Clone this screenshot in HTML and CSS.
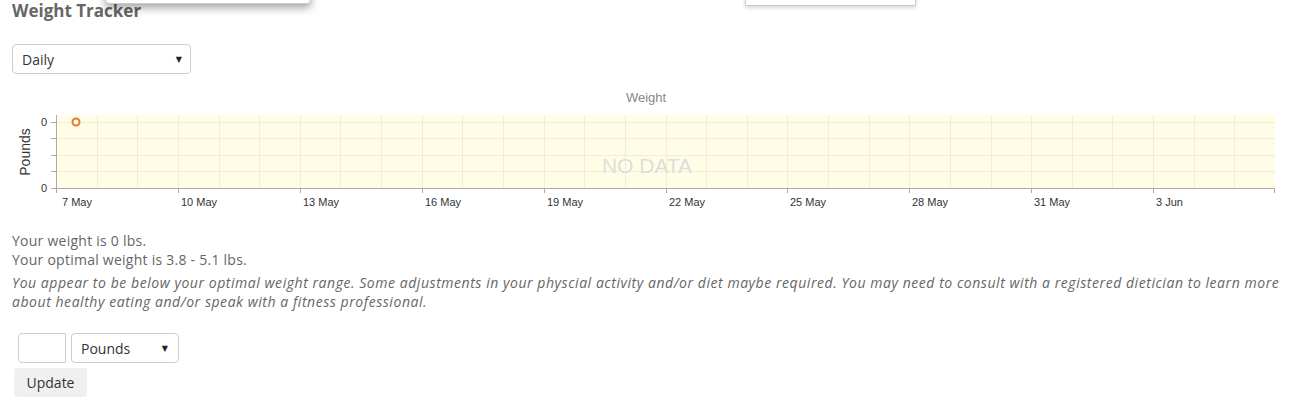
FILE: index.html
```html
<!DOCTYPE html>
<html>
<head>
<meta charset="utf-8">
<link rel="stylesheet" href="styles.css">
</head>
<body>
<div class="page">
  <h2 class="title">Weight Tracker</h2>
  <div class="select period"><span>Daily</span><span class="caret">&#9660;</span></div>
  <svg class="chart" width="1306" height="130" viewBox="0 84 1306 130" xmlns="http://www.w3.org/2000/svg">
    <text x="646" y="102" class="ctitle" text-anchor="middle">Weight</text>
    <rect x="56" y="115" width="1219" height="73" fill="#fffde6"/>
    <g stroke="#efeed6" stroke-width="1">
      <line x1="56" y1="122.5" x2="1275" y2="122.5"/>
      <line x1="56" y1="138.5" x2="1275" y2="138.5"/>
      <line x1="56" y1="155.5" x2="1275" y2="155.5"/>
      <line x1="56" y1="171.5" x2="1275" y2="171.5"/>
    </g>
    <g id="vgrid" stroke="#efeed6" stroke-width="1"></g>
    <text x="647" y="173" class="nodata" text-anchor="middle">NO DATA</text>
    <g stroke="#aaa" stroke-width="1">
      <line x1="56.5" y1="115" x2="56.5" y2="188.5"/>
      <line x1="56" y1="188.5" x2="1275" y2="188.5"/>
      <line x1="51" y1="122.5" x2="56" y2="122.5"/>
      <line x1="51" y1="138.5" x2="56" y2="138.5"/>
      <line x1="51" y1="155.5" x2="56" y2="155.5"/>
      <line x1="51" y1="171.5" x2="56" y2="171.5"/>
      <line x1="51" y1="188.5" x2="56" y2="188.5"/>
    </g>
    <g id="xticks" stroke="#aaa" stroke-width="1"></g>
    <g class="axislbl">
      <text x="47" y="126" text-anchor="end">0</text>
      <text x="47" y="192" text-anchor="end">0</text>
      <text x="62" y="206">7 May</text>
      <text x="181" y="206">10 May</text>
      <text x="303" y="206">13 May</text>
      <text x="425" y="206">16 May</text>
      <text x="547" y="206">19 May</text>
      <text x="669" y="206">22 May</text>
      <text x="790" y="206">25 May</text>
      <text x="912" y="206">28 May</text>
      <text x="1034" y="206">31 May</text>
      <text x="1156" y="206">3 Jun</text>
    </g>
    <text class="ylbl" transform="translate(29.5 152) rotate(-90)" text-anchor="middle">Pounds</text>
    <circle cx="76" cy="122" r="3.5" fill="#fff" stroke="#e8782a" stroke-width="2"/>
  </svg>
  <div class="info">
    <p class="line">Your weight is 0 lbs.<br>Your optimal weight is 3.8 - 5.1 lbs.</p>
    <p class="advice">You appear to be below your optimal weight range. Some adjustments in your physcial activity and/or diet maybe required. You may need to consult with a registered dietician to learn more about healthy eating and/or speak with a fitness professional.</p>
  </div>
  <div class="form">
    <div class="row">
      <div class="num"></div>
      <div class="select unit"><span>Pounds</span><span class="caret">&#9660;</span></div>
    </div>
    <div class="btn">Update</div>
  </div>
</div>
<div class="menu menu1"></div>
<div class="menu menu2"></div>
<script>
(function(){
  var ns="http://www.w3.org/2000/svg";
  var g=document.getElementById("vgrid"), t=document.getElementById("xticks");
  var step=(1275-56)/30;
  for(var i=1;i<=29;i++){
    var x=Math.round(56+i*step)+0.5;
    var l=document.createElementNS(ns,"line");
    l.setAttribute("x1",x);l.setAttribute("x2",x);l.setAttribute("y1",115);l.setAttribute("y2",188);
    g.appendChild(l);
  }
  for(var k=0;k<=10;k++){
    var x2=k<10?Math.round(56+k*3*step)+0.5:1274.5;
    var m=document.createElementNS(ns,"line");
    m.setAttribute("x1",x2);m.setAttribute("x2",x2);m.setAttribute("y1",188);m.setAttribute("y2",193);
    t.appendChild(m);
  }
})();
</script>
</body>
</html>
```
FILE: styles.css
```css
html, body {
  margin: 0;
  padding: 0;
  background: #fff;
}
body {
  font-family: "Open Sans", "Liberation Sans", sans-serif;
  color: #666;
  overflow: hidden;
}
.page {
  padding: 0 12px;
}
.title {
  margin: 0;
  font-size: 17px;
  line-height: 22px;
  font-weight: 700;
  color: #666;
}
.select {
  box-sizing: border-box;
  height: 30px;
  border: 1px solid #ccc;
  border-radius: 4px;
  display: flex;
  align-items: center;
  justify-content: space-between;
  font-size: 14px;
  color: #333;
  background: #fff;
}
.period {
  margin-top: 22px;
  width: 179px;
  padding: 0 8px 0 9px;
}
.caret {
  font-size: 8px;
  color: #222;
  font-family: "DejaVu Sans", sans-serif;
}
.chart {
  display: block;
  margin: 10px -12px 0;
}
.ctitle {
  font-family: "Liberation Sans", Arial, sans-serif;
  font-size: 13px;
  fill: #888;
}
.nodata {
  font-family: "Liberation Sans", Arial, sans-serif;
  font-size: 21px;
  fill: #ddd;
}
.axislbl text {
  font-family: "Liberation Sans", Arial, sans-serif;
  font-size: 11px;
  fill: #333;
}
.ylbl {
  font-family: "Liberation Sans", Arial, sans-serif;
  font-size: 14px;
  fill: #333;
}
.info {
  margin-top: 17px;
  font-size: 14px;
  line-height: 19px;
}
.info p {
  margin: 0;
}
.line {
  letter-spacing: 0.25px;
}
.advice {
  margin-top: 4px !important;
  font-style: italic;
  letter-spacing: 0.55px;
}
.form {
  margin-top: 22px;
  padding-left: 2px;
}
.row {
  display: flex;
  gap: 5px;
  padding-left: 4px;
}
.num {
  box-sizing: border-box;
  width: 48px;
  height: 30px;
  border: 1px solid #ccc;
  border-radius: 4px 0 0 4px;
}
.unit {
  width: 108px;
  padding: 0 10px 0 9px;
}
.btn {
  display: inline-block;
  margin-top: 5px;
  width: 73px;
  height: 29px;
  line-height: 29px;
  text-align: center;
  background: #f0f0f0;
  border-radius: 3px;
  font-size: 14px;
  color: #333;
}
.menu {
  position: absolute;
  background: #fff;
  border: 1px solid #ccc;
  border-radius: 0 0 4px 4px;
}
.menu1 {
  left: 105px;
  top: -100px;
  width: 204px;
  height: 102px;
  box-shadow: 0 4px 8px rgba(0,0,0,0.35);
}
.menu2 {
  left: 745px;
  top: -100px;
  width: 169px;
  height: 104px;
  border-radius: 0;
  box-shadow: 0 2px 4px rgba(0,0,0,0.15);
}
```
